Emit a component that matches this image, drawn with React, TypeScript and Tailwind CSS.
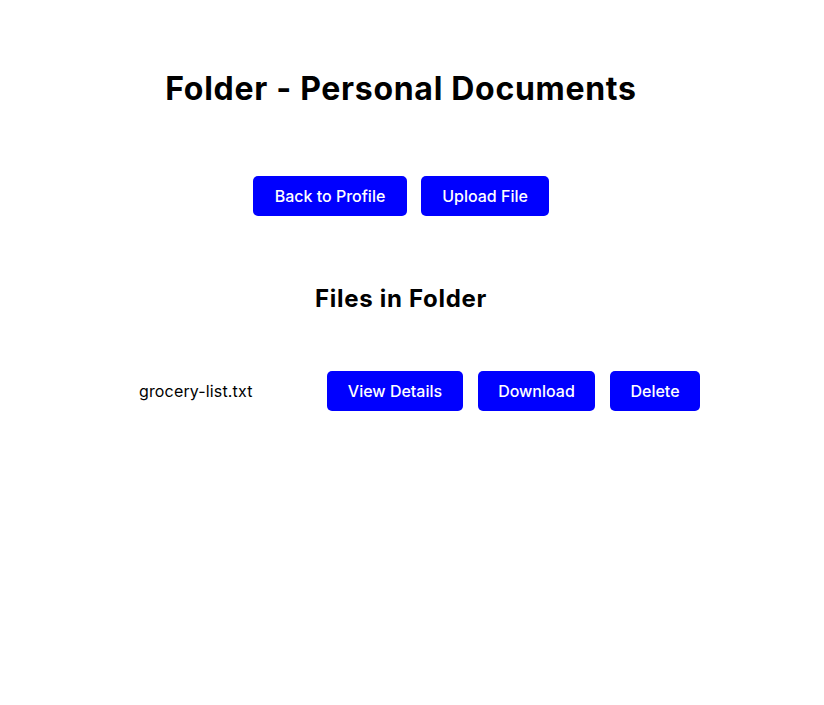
const btn =
  'h-10 rounded-[5px] bg-[#0000ff] text-white text-[16px] font-medium flex items-center justify-center';

const App = () => {
  return (
    <div className="w-[802px] flex flex-col items-center font-['Inter',sans-serif] text-black">
      <h1 className="mt-[69px] text-[32px] leading-[40px] font-bold tracking-[0.7px]">
        Folder - Personal Documents
      </h1>

      <div className="mt-[67px] flex gap-[14px]">
        <button className={`${btn} w-[154px]`}>Back to Profile</button>
        <button className={`${btn} w-[128px]`}>Upload File</button>
      </div>

      <h2 className="mt-[67px] text-[24px] leading-[32px] font-bold tracking-[0.7px]">Files in Folder</h2>

      <ul className="mt-[56px] w-[600px] pl-[38px] pr-px">
        <li className="flex items-center justify-between">
          <span className="text-[16px] tracking-[0.15px]">grocery-list.txt</span>
          <div className="flex gap-[15px]">
            <button className={`${btn} w-[136px]`}>View Details</button>
            <button className={`${btn} w-[117px]`}>Download</button>
            <button className={`${btn} w-[90px]`}>Delete</button>
          </div>
        </li>
      </ul>
    </div>
  );
};

export default App;
